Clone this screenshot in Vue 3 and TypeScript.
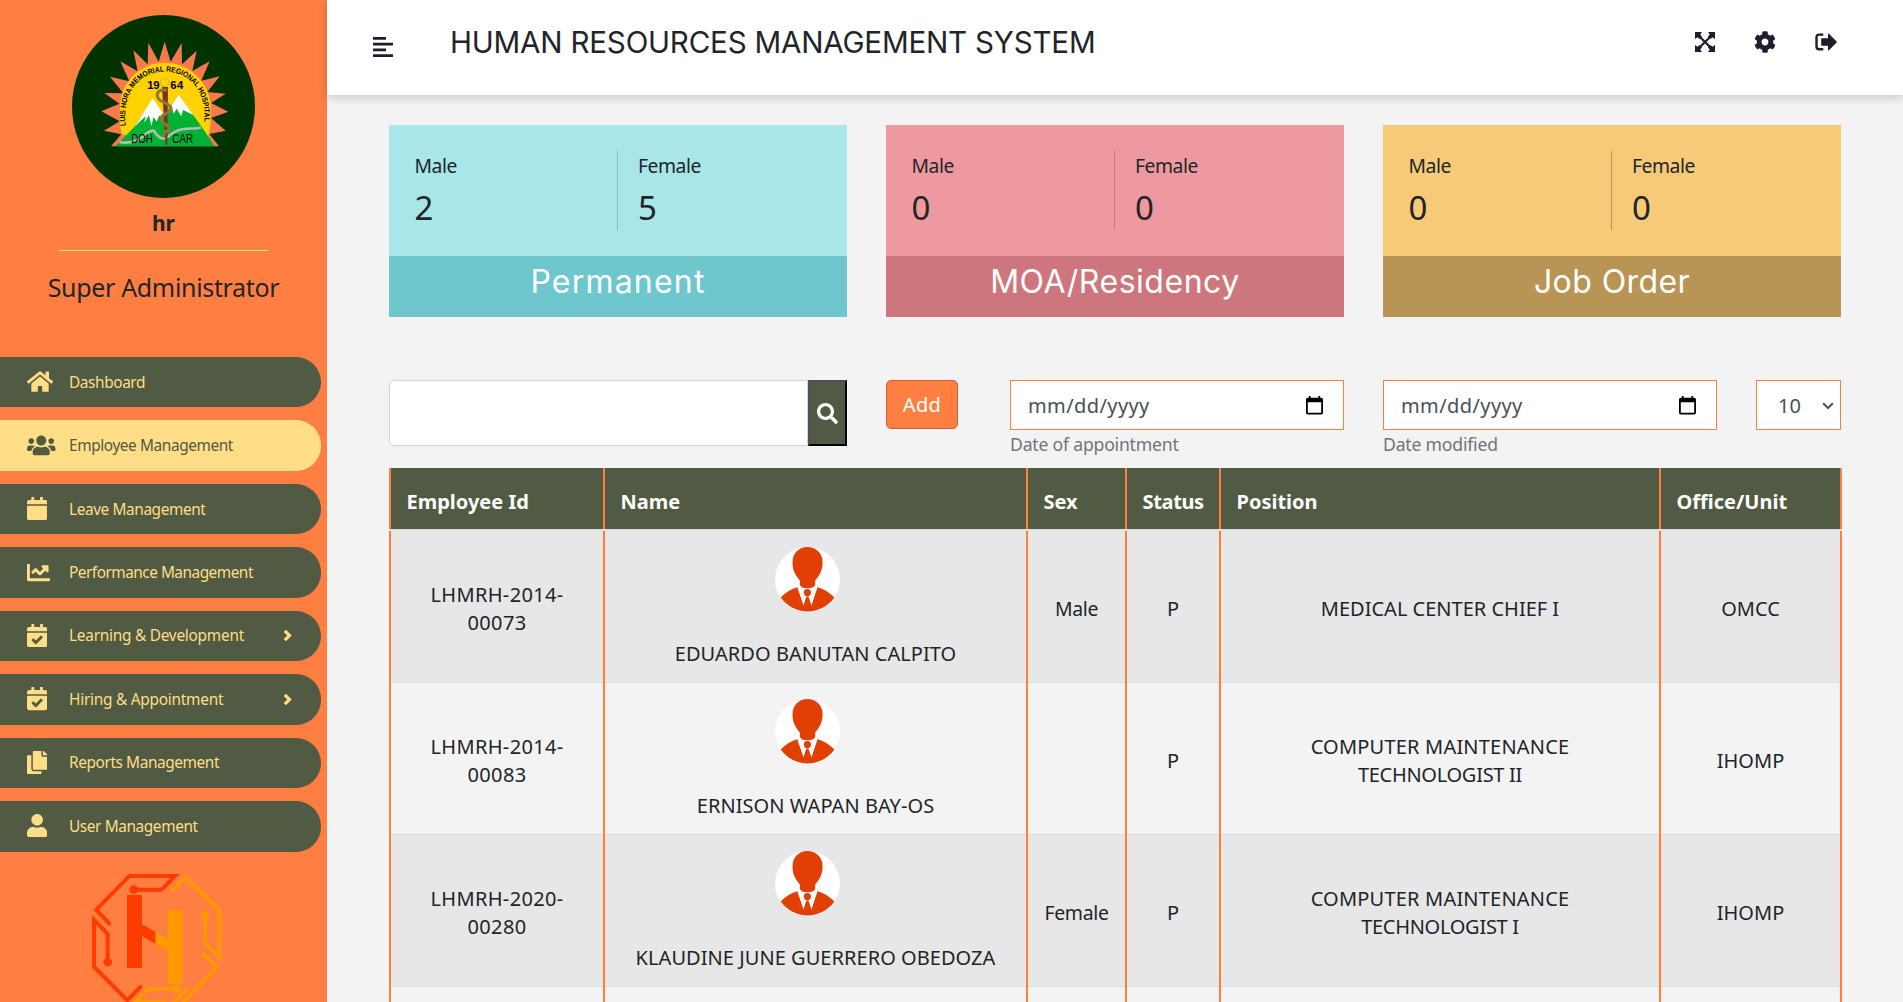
<script setup lang="ts">
interface Icon { w: number; box: string; d: string }
interface MenuItem { label: string; icon: string; active?: boolean; children?: boolean; fit?: string }
interface Stat { title: string; male: number; female: number; tone: string }
interface Employee { id: string[]; name: string; sex: string; status: string; position: string[]; unit: string }

const calendarTop = 'M436 160H12c-6.6 0-12-5.4-12-12v-36c0-26.5 21.5-48 48-48h48V12c0-6.6 5.4-12 12-12h40c6.6 0 12 5.4 12 12v52h128V12c0-6.6 5.4-12 12-12h40c6.6 0 12 5.4 12 12v52h48c26.5 0 48 21.5 48 48v36c0 6.6-5.4 12-12 12z'

const icons: Record<string, Icon> = {
  home: { w: 26, box: '0 0 576 512', d: 'M280.37 148.26L96 300.11V464a16 16 0 0 0 16 16l112.06-.29a16 16 0 0 0 15.92-16V368a16 16 0 0 1 16-16h64a16 16 0 0 1 16 16v95.64a16 16 0 0 0 16 16.05L464 480a16 16 0 0 0 16-16V300L295.67 148.26a12.19 12.19 0 0 0-15.3 0zM571.6 251.47L488 182.56V44.05a12 12 0 0 0-12-12h-56a12 12 0 0 0-12 12v72.61L318.47 43a48 48 0 0 0-61 0L4.34 251.47a12 12 0 0 0-1.6 16.9l25.5 31A12 12 0 0 0 45.15 301l235.22-193.74a12.19 12.19 0 0 1 15.3 0L530.9 301a12 12 0 0 0 16.9-1.6l25.5-31a12 12 0 0 0-1.7-16.93z' },
  users: { w: 28.5, box: '0 0 640 512', d: 'M96 224c35.3 0 64-28.7 64-64s-28.7-64-64-64-64 28.7-64 64 28.7 64 64 64zm448 0c35.3 0 64-28.7 64-64s-28.7-64-64-64-64 28.7-64 64 28.7 64 64 64zm32 32h-64c-17.6 0-33.5 7.1-45.1 18.6 40.3 22.1 68.9 62 75.1 109.4h66c17.7 0 32-14.3 32-32v-32c0-35.3-28.7-64-64-64zm-256 0c61.9 0 112-50.1 112-112S381.9 32 320 32 208 82.1 208 144s50.1 112 112 112zm76.8 32h-8.3c-20.8 10-43.9 16-68.5 16s-47.6-6-68.5-16h-8.3C179.6 288 128 339.6 128 403.2V432c0 26.5 21.5 48 48 48h288c26.5 0 48-21.5 48-48v-28.8c0-63.6-51.6-115.2-115.2-115.2zm-223.7-13.4C161.5 263.1 145.6 256 128 256H64c-35.3 0-64 28.7-64 64v32c0 17.7 14.3 32 32 32h65.9c6.3-47.4 34.9-87.3 75.2-109.4z' },
  calendar: { w: 20.3, box: '0 0 448 512', d: calendarTop + 'M12 192h424c6.6 0 12 5.4 12 12v260c0 26.5-21.5 48-48 48H48c-26.5 0-48-21.5-48-48V204c0-6.6 5.4-12 12-12z' },
  check: { w: 20.3, box: '0 0 448 512', d: calendarTop + 'M12 192h424c6.627 0 12 5.373 12 12v260c0 26.51-21.49 48-48 48H48c-26.51 0-48-21.49-48-48V204c0-6.627 5.373-12 12-12zm333.296 95.947l-28.169-28.398c-4.667-4.705-12.265-4.736-16.97-.068L194.12 364.665l-45.98-46.352c-4.667-4.705-12.266-4.736-16.971-.068l-28.397 28.17c-4.705 4.667-4.736 12.265-.068 16.97l82.601 83.269c4.667 4.705 12.265 4.736 16.97.068l142.953-141.805c4.705-4.667 4.736-12.265.068-16.97z' },
  chart: { w: 23, box: '0 0 512 512', d: 'M496 384H64V80c0-8.84-7.16-16-16-16H16C7.16 64 0 71.16 0 80v336c0 17.67 14.33 32 32 32h464c8.84 0 16-7.16 16-16v-32c0-8.84-7.16-16-16-16zM464 96H345.94c-21.38 0-32.09 25.85-16.97 40.97l32.4 32.4L288 242.75l-73.37-73.37c-12.5-12.5-32.76-12.5-45.25 0l-68.69 68.69c-6.25 6.25-6.25 16.38 0 22.63l22.62 22.62c6.25 6.25 16.38 6.25 22.63 0L192 237.25l73.37 73.37c12.5 12.5 32.76 12.5 45.25 0l96-96 32.4 32.4c15.12 15.12 40.97 4.41 40.97-16.97V112c.01-8.84-7.15-16-15.99-16z' },
  copy: { w: 20.3, box: '0 0 448 512', d: 'M320 448v40c0 13.255-10.745 24-24 24H24c-13.255 0-24-10.745-24-24V120c0-13.255 10.745-24 24-24h72v296c0 30.879 25.121 56 56 56h168zm0-344V0H152c-13.255 0-24 10.745-24 24v368c0 13.255 10.745 24 24 24h272c13.255 0 24-10.745 24-24V128H344c-13.2 0-24-10.8-24-24zm120.971-31.029L375.029 7.029A24 24 0 0 0 358.059 0H352v96h96v-6.059a24 24 0 0 0-7.029-16.97z' },
  user: { w: 20.3, box: '0 0 448 512', d: 'M224 256c70.7 0 128-57.3 128-128S294.7 0 224 0 96 57.3 96 128s57.3 128 128 128zm89.6 32h-16.7c-22.2 10.2-46.9 16-72.9 16s-50.6-5.8-72.9-16h-16.7C60.2 288 0 348.2 0 422.4V464c0 26.5 21.5 48 48 48h352c26.5 0 48-21.5 48-48v-41.6c0-74.2-60.2-134.4-134.4-134.4z' },
}

const menu: MenuItem[] = [
  { label: 'Dashboard', icon: 'home' },
  { label: 'Employee Management', icon: 'users', active: true },
  { label: 'Leave Management', icon: 'calendar' },
  { label: 'Performance Management', icon: 'chart', fit: 'narrow' },
  { label: 'Learning & Development', icon: 'check', children: true, fit: 'wide' },
  { label: 'Hiring & Appointment', icon: 'check', children: true, fit: 'wide' },
  { label: 'Reports Management', icon: 'copy' },
  { label: 'User Management', icon: 'user' },
]

const stats: Stat[] = [
  { title: 'Permanent', male: 2, female: 5, tone: 'teal' },
  { title: 'MOA/Residency', male: 0, female: 0, tone: 'rose' },
  { title: 'Job Order', male: 0, female: 0, tone: 'gold' },
]

const columns = ['Employee Id', 'Name', 'Sex', 'Status', 'Position', 'Office/Unit']

const employees: Employee[] = [
  { id: ['LHMRH-2014-', '00073'], name: 'EDUARDO BANUTAN CALPITO', sex: 'Male', status: 'P', position: ['MEDICAL CENTER CHIEF I'], unit: 'OMCC' },
  { id: ['LHMRH-2014-', '00083'], name: 'ERNISON WAPAN BAY-OS', sex: '', status: 'P', position: ['COMPUTER MAINTENANCE', 'TECHNOLOGIST II'], unit: 'IHOMP' },
  { id: ['LHMRH-2020-', '00280'], name: 'KLAUDINE JUNE GUERRERO OBEDOZA', sex: 'Female', status: 'P', position: ['COMPUTER MAINTENANCE', 'TECHNOLOGIST I'], unit: 'IHOMP' },
]
</script>

<template>
  <div class="app">
    <aside class="sidebar">
      <svg class="seal" viewBox="216 44 549 549">
        <circle cx="490.500" cy="318.500" r="274.500" fill="#003300" />
        <path fill="#f9784c" d="M333 438L364 402L312 391L359 363L304 333L358 310L313 278L370 279L330 229L388 243L361 183L413 213L400 150L443 192L445 127L476 184L494 124L512 184L545 128L546 192L590 151L577 212L629 183L604 241L659 228L622 275L677 280L633 308L685 334L633 353L677 391L628 401L657 438Z" />
        <path fill="#ffd200" d="M366 402C359 380 358 350 360 318C364 240 424 187 494 187C565 187 629 242 632 318C633 352 631 382 627 404L494 430Z" />
        <path fill="#00b233" d="M346 438L402 381L458 296L491 345L536 285L604 378L644 438Z" />
        <path fill="#fff" d="M458 293L436 328L403 381L436 348L433 367L447 345L454 377L461 350L470 364L478 345L485 358L492 343ZM536 283L508 324L516 321L521 340L530 325L544 348L549 329L580 344Z" />
        <path fill="none" stroke="#b9bcb4" stroke-width="8" d="M358 425C390 431 409 422 424 412C442 398 455 386 463 393C472 410 488 421 503 410C521 394 533 388 552 386C575 382 588 388 603 381" />
        <circle cx="494" cy="246" r="13" fill="#ffd200" stroke="#c8a52c" stroke-width="2" />
        <path fill="#7c2f35" d="M486 260H504L502 434H497Z" />
        <path fill="none" stroke="#8d7a2b" stroke-width="9" stroke-linecap="round" d="M498 269C469 266 466 287 480 300C498 309 519 316 511 331C500 342 478 343 484 361C492 374 512 375 507 387C500 398 488 391 493 402" />
        <path id="sealArc" fill="none" d="M377 376C374 350 376 318 382 300C398 246 440 214 494 214C548 214 592 246 607 300C613 318 615 350 611 376" />
        <text class="seal-arc"><textPath href="#sealArc" textLength="446" lengthAdjust="spacingAndGlyphs">LUIS HORA MEMORIAL REGIONAL HOSPITAL</textPath></text>
        <g class="seal-year"><text x="442" y="266" textLength="37">19</text><text x="511" y="266" textLength="39">64</text></g>
        <g class="seal-base"><text x="394" y="428" textLength="64" lengthAdjust="spacingAndGlyphs">DOH</text><text x="517" y="428" textLength="62" lengthAdjust="spacingAndGlyphs">CAR</text></g>
      </svg>
      <div class="user-name">hr</div>
      <div class="rule"></div>
      <div class="role">Super Administrator</div>

      <nav class="menu">
        <a v-for="item in menu" :key="item.label" class="item" :class="{ active: item.active }">
          <span class="icon-slot">
            <svg :viewBox="icons[item.icon].box" :width="icons[item.icon].w"><path :d="icons[item.icon].d" /></svg>
          </span>
          <span class="label" :class="item.fit">{{ item.label }}</span>
          <svg v-if="item.children" class="caret" viewBox="0 0 9 13"><path d="M1.800 1.800L6.500 6.500L1.800 11.200" /></svg>
        </a>
      </nav>

      <svg class="brand" viewBox="270 636 400 390">
        <g class="trace red">
          <path d="M328 788L289 746L388 645H525L485 686H412" />
          <path d="M323 893V819L282 776V917L382 1018L421 978" />
        </g>
        <g class="trace amber">
          <path d="M518 688L556 648L658 748V888L615 846V773" />
          <path d="M611 880L651 918L545 1030" />
          <path d="M563 982L518 1028M517 984H444L404 1024H495" />
        </g>
        <path fill="#ff3b00" d="M381 702h45v88l41 23v36l-41-24v96h-45z" />
        <path fill="#ff9900" d="M467 813l36 22v-87h44v221h-44v-99l-36-21z" />
        <circle cx="401" cy="686" r="13" fill="#ff3b00" /><circle cx="323" cy="903" r="13" fill="#ff3b00" />
        <circle cx="616" cy="762" r="13" fill="#ff9900" /><circle cx="528" cy="984" r="13" fill="#ff9900" />
      </svg>
    </aside>

    <main class="main">
      <header class="topbar">
        <svg class="burger" viewBox="0 0 20 20"><path d="M0 0h13v2.700H0zM0 5.700h20v2.700H0zM0 11.500h13v2.700H0zM0 17.200h20v2.700H0z" /></svg>
        <h1>HUMAN RESOURCES MANAGEMENT SYSTEM</h1>
        <div class="tools">
          <svg width="20" height="20" viewBox="0 0 20 20">
            <path d="M0 0H7L5.200 2.600L7 4.500L4.500 7L2.600 5.200L0 7ZM20 0V7L17.400 5.200L15.500 7L13 4.500L14.800 2.600L13 0ZM0 20V13L2.600 14.800L4.500 13L7 15.500L5.200 17.400L7 20ZM20 20H13L14.800 17.400L13 15.500L15.500 13L17.400 14.800L20 13Z" />
            <path d="M4 4L16 16M16 4L4 16" fill="none" stroke="#1f1d2e" stroke-width="2.200" />
          </svg>
          <svg width="22" height="22" viewBox="0 0 512 512"><path d="M487.400 315.700l-42.600-24.600c4.300-23.200 4.300-47 0-70.200l42.600-24.600c4.900-2.800 7.100-8.600 5.500-14-11.100-35.600-30-67.800-54.700-94.600-3.800-4.100-10-5.100-14.800-2.300L380.800 110c-17.900-15.400-38.500-27.300-60.800-35.100V25.800c0-5.600-3.900-10.500-9.400-11.700-36.700-8.200-74.300-7.800-109.200 0-5.500 1.200-9.400 6.100-9.400 11.700V75c-22.200 7.900-42.800 19.800-60.800 35.100L88.700 85.500c-4.900-2.800-11-1.900-14.800 2.300-24.700 26.700-43.600 58.900-54.700 94.600-1.700 5.400.6 11.200 5.500 14L67.300 221c-4.300 23.200-4.300 47 0 70.200l-42.600 24.600c-4.900 2.800-7.100 8.600-5.500 14 11.100 35.600 30 67.800 54.700 94.600 3.800 4.100 10 5.100 14.800 2.300l42.600-24.600c17.900 15.400 38.500 27.300 60.800 35.100v49.200c0 5.600 3.900 10.500 9.400 11.700 36.700 8.200 74.300 7.800 109.200 0 5.500-1.200 9.400-6.100 9.400-11.700v-49.200c22.200-7.900 42.800-19.800 60.800-35.100l42.600 24.600c4.900 2.800 11 1.900 14.800-2.300 24.700-26.700 43.600-58.900 54.700-94.600 1.500-5.500-.7-11.300-5.600-14.100zM256 336c-44.100 0-80-35.900-80-80s35.900-80 80-80 80 35.900 80 80-35.900 80-80 80z" /></svg>
          <svg width="22" height="18" viewBox="0 0 22 18">
            <path d="M8.300 1.600H4.200Q1.500 1.600 1.500 4.300V13.500Q1.500 16.200 4.200 16.200H8.300" fill="none" stroke="#1f1d2e" stroke-width="2.400" />
            <path d="M7 5.200H13V0.800Q13.200 0.200 14 0.700L21.600 8.400Q22 8.900 21.600 9.400L14 17.200Q13.200 17.700 13 17V12.700H7Q6.200 12.700 6.200 12V6Q6.200 5.200 7 5.200Z" />
          </svg>
        </div>
      </header>

      <section class="content">
        <div class="stats">
          <article v-for="s in stats" :key="s.title" class="stat" :class="s.tone">
            <div class="stat-body">
              <div class="half"><span>Male</span><strong>{{ s.male }}</strong></div>
              <div class="half right"><span>Female</span><strong>{{ s.female }}</strong></div>
            </div>
            <h2>{{ s.title }}</h2>
          </article>
        </div>

        <div class="filters">
          <div class="search">
            <input type="text" aria-label="Search" />
            <button type="button" aria-label="Search">
              <svg viewBox="0 0 512 512"><path d="M505 442.700L405.300 343c-4.500-4.500-10.600-7-17-7H372c27.600-35.300 44-79.700 44-128C416 93.100 322.900 0 208 0S0 93.100 0 208s93.100 208 208 208c48.300 0 92.700-16.400 128-44v16.300c0 6.400 2.500 12.500 7 17l99.700 99.700c9.400 9.400 24.600 9.400 33.900 0l28.300-28.300c9.400-9.400 9.400-24.600.1-34zM208 336c-70.700 0-128-57.200-128-128 0-70.700 57.200-128 128-128 70.700 0 128 57.200 128 128 0 70.700-57.200 128-128 128z" /></svg>
            </button>
          </div>
          <button type="button" class="add">Add</button>
          <div v-for="caption in ['Date of appointment', 'Date modified']" :key="caption" class="date">
            <div class="date-box">
              <span>mm/dd/yyyy</span>
              <svg width="17" height="19" viewBox="0 0 17 19"><path fill-rule="evenodd" d="M2.800 0H4.600V1.800H12.400V0H14.200V1.800H15.200Q17 1.800 17 3.600V16.700Q17 18.500 15.200 18.500H1.800Q0 18.500 0 16.700V3.600Q0 1.800 1.800 1.800H2.800ZM1.800 6.200V16.700H15.200V6.200Z" /></svg>
            </div>
            <small>{{ caption }}</small>
          </div>
          <div class="size">
            <span>10</span>
            <svg viewBox="0 0 12 8"><path d="M1.200 1.300L6 6.100L10.800 1.300" /></svg>
          </div>
        </div>

        <div class="table">
          <div class="row head">
            <div v-for="c in columns" :key="c" class="cell" :class="{ tight: c === 'Status' }">{{ c }}</div>
          </div>
          <div v-for="e in employees" :key="e.id.join('')" class="row">
            <div class="cell id"><span v-for="p in e.id" :key="p">{{ p }}</span></div>
            <div class="cell person">
              <svg class="avatar" viewBox="0 0 65 65">
                <circle cx="32.500" cy="32.500" r="32.500" fill="#fff" />
                <g fill="#e23f05">
                  <path d="M32.400 0C41 0 47.600 6 47.600 15.500C47.600 24 44 29 40.200 33.500V37.500C39.500 40.300 36.500 41.200 32.400 41.200C28.300 41.200 25.600 40.300 24.900 37.500V33.500C21 29 17.500 24 17.500 15.500C17.500 6 24 0 32.400 0Z" />
                  <path d="M5.800 50.500C10 46 16 42 22.300 40.300L28.500 58.500L31.300 49.500H33.500L36.500 58.500L42.500 40.300C49 42 55 46 59.300 50.500A32.500 32.500 0 0 1 5.800 50.500Z" />
                  <circle cx="32.400" cy="45.600" r="3.600" />
                </g>
              </svg>
              <span>{{ e.name }}</span>
            </div>
            <div class="cell mixed">{{ e.sex }}</div>
            <div class="cell">{{ e.status }}</div>
            <div class="cell"><span v-for="p in e.position" :key="p" :class="{ loose: p === 'COMPUTER MAINTENANCE', snug: p.startsWith('TECH') }">{{ p }}</span></div>
            <div class="cell">{{ e.unit }}</div>
          </div>
          <div class="row"><div v-for="c in columns" :key="c" class="cell"></div></div>
        </div>
      </section>
    </main>
  </div>
</template>

<style>
html, body { overflow: hidden; }
</style>

<style scoped>
* { box-sizing: border-box; }
svg { display: block; flex: none; }
.app { display: flex; width: 100vw; height: 100vh; overflow: hidden; background: #f3f3f3; color: #212529; font: 20px/28px "Noto Sans", "Open Sans", sans-serif; }

.sidebar { display: flex; flex-direction: column; align-items: center; flex: none; width: 327px; height: 100%; padding-top: 15px; overflow: hidden; background: #ff7f43; }
.seal { width: 183px; height: 183px; }
.seal-arc { font: 700 23px "Liberation Sans", sans-serif; }
.seal-year { font: 700 34px "Liberation Sans", sans-serif; }
.seal-base { font: 38px "Liberation Sans", sans-serif; }
.user-name { margin-top: 11px; font-size: 21px; font-weight: 700; }
.rule { width: 209px; height: 1px; margin-top: 13px; background: #ffde82; flex: none; }
.role { margin-top: 18px; font-size: 25px; line-height: 36px; letter-spacing: -0.330px; white-space: nowrap; }
.menu { display: flex; flex-direction: column; gap: 13px; width: 100%; margin-top: 52px; }
.item { display: flex; align-items: center; flex: none; width: 321px; height: 50.450px; padding-left: 27px; border-radius: 0 25px 25px 0; background: #515a42; color: #ffde87; fill: #ffde87; }
.item.active { background: #ffde87; color: #515a42; fill: #515a42; }
.icon-slot { display: flex; width: 42px; padding-bottom: 1px; }
.label { flex: 1; padding-top: 1px; font-size: 15.400px; letter-spacing: -0.400px; white-space: nowrap; }
.label.narrow { letter-spacing: -0.500px; }
.label.wide { letter-spacing: -0.250px; }
.caret { width: 9px; height: 13px; margin-right: 29px; fill: none; stroke: #ffde87; stroke-width: 3.200; }
.brand { width: 133.300px; height: 130px; flex: none; align-self: flex-start; margin: 21px 0 0 90px; }
.trace { fill: none; stroke-width: 12; stroke-linecap: round; }
.trace.red { stroke: #ff3b00; }
.trace.amber { stroke: #ff9900; }

.main { display: flex; flex-direction: column; flex: 1; min-width: 0; }
.topbar { display: flex; align-items: flex-start; flex: none; height: 95px; padding: 0 66px 0 46px; background: #fff; box-shadow: 0 2px 10px rgba(0, 0, 0, 0.200); fill: #1f1d2e; }
.burger { width: 20px; height: 20px; margin-top: 37px; }
h1 { margin: 20px 0 0 57px; font: 400 29.600px/44px Inter, sans-serif; letter-spacing: -0.220px; white-space: nowrap; }
.tools { display: flex; align-items: center; gap: 39px; height: 22px; margin: 31px 0 0 auto; }

.content { flex: 1; min-height: 0; padding: 30px 61px 0 62px; }
.stats { display: flex; gap: 39px; }
.stat { width: 458px; height: 192px; }
.stat-body { display: flex; height: 131px; padding-top: 26px; }
.half { display: flex; flex-direction: column; width: 228px; height: 79px; padding-left: 25.500px; }
.half.right { width: 230px; padding-left: 20px; border-left: 1px solid; }
.half span { color: #212529; font-size: 19.300px; line-height: 30px; letter-spacing: -0.450px; }
.half strong { color: #212529; font-size: 33px; font-weight: 400; line-height: 53px; letter-spacing: -1px; }
h2 { height: 61px; margin: 0; color: #fff; font: 400 32px/51px Inter, sans-serif; text-align: center; }
.teal { background: #a8e6e8; }
.teal h2 { background: #6ec7cd; letter-spacing: 1.200px; }
.teal .right { border-color: #6ec7cd; }
.rose { background: #ee99a0; }
.rose h2 { background: #ce767d; letter-spacing: 0.530px; }
.rose .right { border-color: #ce767d; }
.gold { background: #f6ca77; }
.gold h2 { background: #b89554; letter-spacing: 0.420px; }
.gold .right { border-color: #b89554; }

.filters { display: flex; align-items: flex-start; height: 88px; margin-top: 63px; }
.search { display: flex; width: 458px; height: 66px; }
.search input { flex: 1; min-width: 0; padding: 0 16px; border: 1px solid #ced4da; border-radius: 5px 0 0 5px; background: #fff; font: inherit; }
.search button { display: flex; align-items: center; justify-content: center; width: 39px; padding: 0; border: 2px solid; border-color: #4c4f55 #000 #000 #4c4f55; background: #515a42; }
.search button svg { width: 21px; height: 21px; fill: #fff; }
.add { width: 72px; height: 49px; margin: 0 52px 0 39px; padding: 1px 0 0; border: 1px solid #c9622f; border-radius: 5px; background: #ff7f43; color: #fff; font: inherit; letter-spacing: 0.400px; }
.date { display: flex; flex-direction: column; width: 334px; margin-right: 39px; }
.date-box { display: flex; align-items: center; justify-content: space-between; height: 50px; padding: 1px 20px 0 17px; border: 1px solid #ff7f43; background: #fff; color: #495057; letter-spacing: 0.400px; }
.date-box svg { fill: #000; }
.date small { color: #6c757d; font-size: 17.600px; line-height: 29px; letter-spacing: -0.200px; }
.size { display: flex; align-items: center; justify-content: space-between; width: 85px; height: 50px; padding: 1px 6px 0 21px; border: 1px solid #ff7f43; background: #fff; color: #495057; }
.size svg { width: 12px; height: 8px; fill: none; stroke: #495057; stroke-width: 2; }

.table { width: 1453px; }
.row { display: grid; grid-template-columns: 216px 423px 99px 94px 440px 181px; height: 152px; background: #f3f3f3; }
.row:nth-child(even) { background: #e7e7e7; }
.cell { display: flex; flex-direction: column; align-items: center; justify-content: center; padding: 3px 0 0; border-right: 2px solid #ff7f43; box-shadow: inset 0 -1px #dee2e6; white-space: nowrap; }
.cell:first-child { border-left: 2px solid #ff7f43; }
.id { letter-spacing: 0.350px; }
.person { justify-content: flex-start; padding-top: 16px; letter-spacing: 0.050px; }
.avatar { width: 65px; height: 65px; margin: 0 16px 28px 0; }
.loose { letter-spacing: 0.200px; }
.snug { letter-spacing: -0.280px; }
.mixed { font-size: 19.400px; letter-spacing: -0.300px; }
.head { height: 63px; border-bottom: 2px solid #dee2e6; background: #515a42; color: #fff; font-weight: 700; }
.head .cell { align-items: flex-start; padding: 6px 0 0 15.500px; box-shadow: none; }
.head .tight { letter-spacing: -0.350px; }
</style>
